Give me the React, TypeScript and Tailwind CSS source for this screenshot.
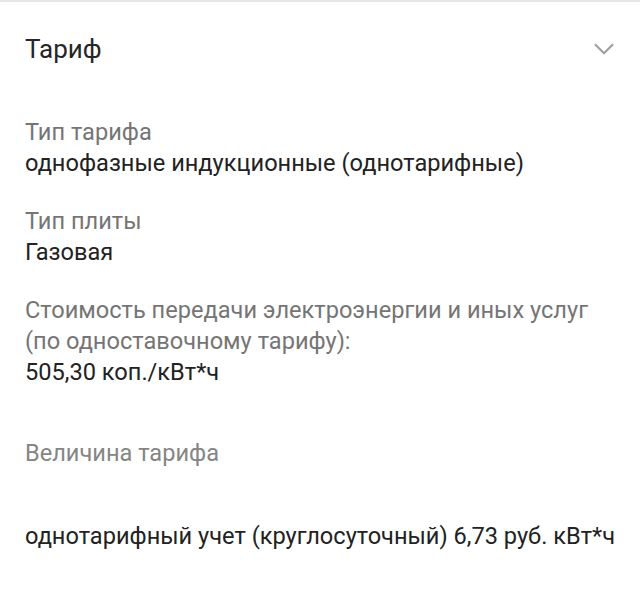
import { ChevronDown } from 'lucide-react';

type Field = {
  label: string;
  value: string;
};

const fields: Field[] = [
  { label: 'Тип тарифа', value: 'однофазные индукционные (однотарифные)' },
  { label: 'Тип плиты', value: 'Газовая' },
];

const App = () => {
  return (
    <div className="min-h-[604px] w-[640px] bg-white border-t-2 border-[#e6e6e6] font-['Roboto',sans-serif]">
      <header className="h-[94px] pl-[25px] pr-[19px] flex items-center justify-between">
        <span className="text-[26px] text-[#262626]">Тариф</span>
        <ChevronDown className="w-[34px] h-[34px] text-[#a0a0a0]" strokeWidth={1.5} />
      </header>

      <div className="px-[25px] text-[23.6px] leading-[31px]">
        <div className="pt-[21px] flex flex-col gap-[27px]">
          {fields.map(f => (
            <div key={f.label}>
              <div className="text-[#757575]">{f.label}</div>
              <div className="text-[#222]">{f.value}</div>
            </div>
          ))}
          <div>
            <div className="text-[#757575]">
              Стоимость передачи электроэнергии и иных услуг
              <br />
              (по одноставочному тарифу):
            </div>
            <div className="text-[#222]">505,30 коп./кВт*ч</div>
          </div>
        </div>

        <div className="pt-[50px] text-[#858585]">Величина тарифа</div>
        <div className="pt-[52px] text-[#222] whitespace-nowrap">
          однотарифный учет (круглосуточный) 6,73 руб. кВт*ч
        </div>
      </div>
    </div>
  );
};

export default App;
